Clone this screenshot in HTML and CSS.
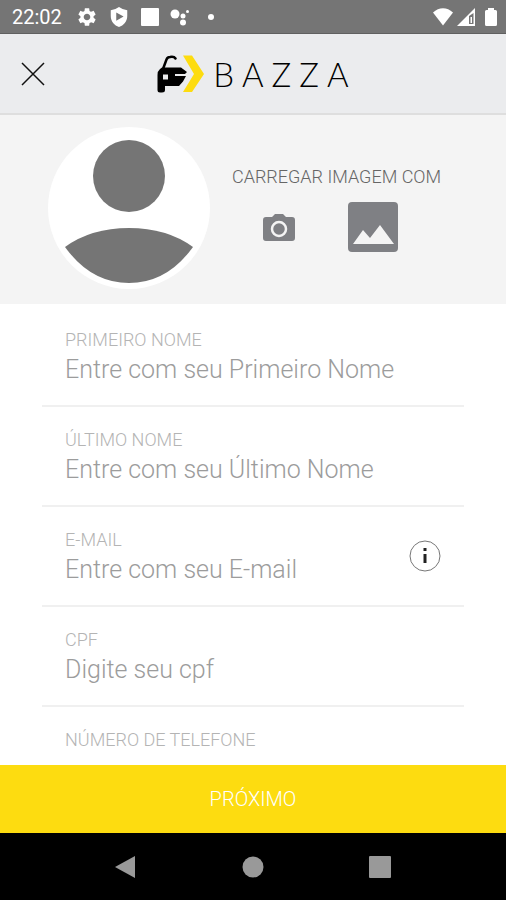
FILE: index.html
```html
<!DOCTYPE html>
<html lang="pt-BR">

<head>
    <meta charset="UTF-8">
    <meta name="viewport" content="width=device-width, initial-scale=1.0">
    <title>Bazza</title>
    <link rel="stylesheet" href="styles.css">
</head>

<body>
    <div class="status">
        <span class="clock">22:02</span>
        <div class="status-left">
            <svg width="22" height="22" viewBox="0 0 24 24">
                <path d="M19.14 12.94c.04-.3.06-.61.06-.94 0-.32-.02-.64-.07-.94l2.03-1.58c.18-.14.23-.41.12-.61l-1.92-3.32c-.12-.22-.37-.29-.59-.22l-2.39.96c-.5-.38-1.03-.7-1.62-.94l-.36-2.54c-.04-.24-.24-.41-.48-.41h-3.84c-.24 0-.43.17-.47.41l-.36 2.54c-.59.24-1.13.57-1.62.94l-2.39-.96c-.22-.08-.47 0-.59.22L2.74 8.87c-.12.21-.08.47.12.61l2.03 1.58c-.05.3-.09.63-.09.94s.02.64.07.94l-2.03 1.58c-.18.14-.23.41-.12.61l1.92 3.32c.12.22.37.29.59.22l2.39-.96c.5.38 1.03.7 1.62.94l.36 2.54c.05.24.24.41.48.41h3.84c.24 0 .44-.17.47-.41l.36-2.54c.59-.24 1.13-.56 1.62-.94l2.39.96c.22.08.47 0 .59-.22l1.92-3.32c.12-.22.07-.47-.12-.61l-2.01-1.58zM12 15.6c-1.98 0-3.6-1.62-3.6-3.6s1.62-3.6 3.6-3.6 3.6 1.62 3.6 3.6-1.62 3.6-3.6 3.6z"/>
            </svg>
            <svg width="22" height="22" viewBox="0 0 24 24">
                <path fill-rule="evenodd" d="M12 1Q8 4 3 4.500V11C3 17 7 21.500 12 23C17 21.500 21 17 21 11V4.500Q16 4 12 1zM9 7l8 4.500L9 16z"/>
            </svg>
            <svg width="20" height="20" viewBox="0 0 20 20">
                <rect x="1" y="1" width="18" height="18" rx="1"/>
            </svg>
            <svg width="20" height="20" viewBox="0 0 20 20">
                <circle cx="5" cy="7" r="4.500"/>
                <circle cx="13" cy="9" r="2.500"/>
                <circle cx="17.500" cy="4.500" r="1.500"/>
                <circle cx="13" cy="15.500" r="3"/>
            </svg>
            <svg width="22" height="22" viewBox="0 0 22 22">
                <circle cx="11" cy="11" r="3"/>
            </svg>
        </div>
        <div class="status-right">
            <svg width="22" height="20" viewBox="0 0 22 20">
                <path d="M1 5.500C7-.200 15-.200 21 5.500L11 18.500z"/>
            </svg>
            <svg width="20" height="20" viewBox="0 0 20 20">
                <path fill-rule="evenodd" d="M1 19L19 1v18zM13 9V17H17.500V6z"/>
                <path d="M14.500 10h1.500v6h-1.500z"/>
            </svg>
            <svg class="battery" width="14" height="20" viewBox="0 0 14 20">
                <path d="M4 1h6v2h1.500Q13 3 13 4.500v13Q13 19 11.500 19h-9Q1 19 1 17.500v-13Q1 3 2.500 3H4z"/>
            </svg>
        </div>
    </div>

    <header class="header">
        <button class="close" type="button" aria-label="Fechar">
            <svg width="24" height="24" viewBox="0 0 24 24">
                <path d="M1 1L23 23M23 1L1 23"/>
            </svg>
        </button>
        <div class="logo">
            <svg width="48" height="38" viewBox="0 0 48 38">
                <path fill="none" stroke="#000" stroke-width="2.500" stroke-linecap="round" d="M6 14L9.500 4.500Q10.500 2 13 2Q17 1.200 18.500 3.500"/>
                <path fill-rule="evenodd" d="M3 14L5 12.500H24L30 17L28 19H18V21H29L26 26.500L22 31H8V35Q8 37.500 5 37.500H3Q.500 37.500 .500 35V20Q.500 16 3 14zM6 19.500V24.500H11V19.500z"/>
                <path fill="#fddc10" d="M26 .500H35L47 19L35 37H26L37 19z"/>
            </svg>
            <span class="logo-name">BAZZA</span>
        </div>
    </header>

    <section class="upload">
        <svg class="avatar" width="162" height="162" viewBox="0 0 162 162">
            <circle cx="81" cy="81" r="81" fill="#fff"/>
            <circle cx="81" cy="49" r="36"/>
            <path d="M17 120Q43 101 81 101T145 120Q119 156 81 156T17 120z"/>
        </svg>
        <div class="upload-options">
            <p class="upload-title">CARREGAR IMAGEM COM</p>
            <div class="upload-buttons">
                <button type="button" aria-label="Câmera">
                    <svg width="32" height="28" viewBox="0 0 32 28">
                        <path d="M3 4H9L12 1H20L23 4H29Q32 4 32 7V25Q32 28 29 28H3Q0 28 0 25V7Q0 4 3 4z"/>
                        <circle cx="16" cy="16" r="7" fill="none" stroke="#f4f4f4" stroke-width="2.500"/>
                    </svg>
                </button>
                <button type="button" aria-label="Galeria">
                    <svg width="52" height="50" viewBox="0 0 52 50">
                        <rect x="1" width="50" height="50" rx="4"/>
                        <path fill="#f4f4f4" d="M6 42L16 28L23 36L33 23L47 42z"/>
                    </svg>
                </button>
            </div>
        </div>
    </section>

    <form class="form">
        <div class="field">
            <label for="nome">PRIMEIRO NOME</label>
            <input id="nome" type="text" placeholder="Entre com seu Primeiro Nome">
        </div>
        <div class="field">
            <label for="sobrenome">ÚLTIMO NOME</label>
            <input id="sobrenome" type="text" placeholder="Entre com seu Último Nome">
        </div>
        <div class="field field-info">
            <label for="email">E-MAIL</label>
            <input id="email" type="email" placeholder="Entre com seu E-mail">
            <button class="info" type="button" aria-label="Informações">
                <svg width="32" height="32" viewBox="0 0 32 32">
                    <circle cx="16" cy="16" r="15" fill="none" stroke="#777" stroke-width="1"/>
                    <path d="M14.500 8h3v3h-3zM14.500 14h3v9h-3z"/>
                </svg>
            </button>
        </div>
        <div class="field">
            <label for="cpf">CPF</label>
            <input id="cpf" type="text" placeholder="Digite seu cpf">
        </div>
        <div class="field">
            <label for="telefone">NÚMERO DE TELEFONE</label>
            <input id="telefone" type="tel">
        </div>
    </form>

    <button class="next" type="button">PRÓXIMO</button>

    <nav class="navbar">
        <button type="button" aria-label="Voltar">
            <svg width="24" height="24" viewBox="0 0 24 24">
                <path d="M1 12L21 1V23z"/>
            </svg>
        </button>
        <button type="button" aria-label="Início">
            <svg width="24" height="24" viewBox="0 0 24 24">
                <circle cx="12" cy="12" r="10.500"/>
            </svg>
        </button>
        <button type="button" aria-label="Recentes">
            <svg width="24" height="24" viewBox="0 0 24 24">
                <rect x="1" y="1" width="22" height="22" rx="1"/>
            </svg>
        </button>
    </nav>
</body>

</html>
```
FILE: styles.css
```css
* {
    box-sizing: border-box;
}

body {
    display: flex;
    flex-direction: column;
    height: 100vh;
    margin: 0;
    font-family: Roboto, sans-serif;
    font-weight: 300;
    background: #fff;
}

button {
    padding: 0;
    border: 0;
    background: none;
    font: inherit;
    cursor: pointer;
}

svg {
    display: block;
}

.status {
    display: flex;
    flex: none;
    align-items: center;
    height: 34px;
    padding: 0 8px 0 12px;
    background: #757575;
    border-bottom: 1px solid #606060;
    color: #fff;
    fill: #fff;
}

.clock {
    font-size: 20px;
    font-weight: 400;
}

.status-left {
    display: flex;
    align-items: center;
    gap: 10px;
    margin-left: 14px;
}

.status-right {
    display: flex;
    align-items: center;
    gap: 2px;
    margin-left: auto;
}

.battery {
    margin-left: 6px;
}

.header {
    display: grid;
    grid-template-columns: 1fr auto 1fr;
    flex: none;
    align-items: center;
    height: 81px;
    padding: 0 21px;
    background: #ebecee;
    border-bottom: 2px solid #dedede;
}

.close {
    justify-self: start;
    stroke: #111;
    stroke-width: 1.5;
}

.logo {
    display: flex;
    align-items: center;
    gap: 8px;
}

.logo-name {
    margin-right: -8px;
    font-family: Lato, sans-serif;
    font-size: 33px;
    font-weight: 300;
    line-height: 40px;
    letter-spacing: 8px;
    color: #000;
}

.upload {
    display: flex;
    flex: none;
    align-items: center;
    gap: 22px;
    height: 189px;
    padding: 0 48px 4px;
    background: #f4f4f4;
}

.avatar {
    flex: none;
    fill: #757575;
}

.upload-options {
    display: flex;
    flex-direction: column;
    gap: 12px;
}

.upload-title {
    margin: 0;
    font-size: 18px;
    line-height: 26px;
    color: #666;
    white-space: nowrap;
}

.upload-buttons {
    display: flex;
    align-items: center;
    gap: 52px;
    padding-left: 31px;
    fill: #7f8084;
}

.form {
    flex: 1;
    min-height: 0;
    padding: 3px 42px 0;
    overflow: hidden;
}

.field {
    display: grid;
    grid-template-rows: 20px 38px;
    height: 100px;
    padding: 23px 23px 0;
    border-bottom: 2px solid #f0f0f0;
}

.field-info {
    grid-template-columns: 1fr auto;
}

.field label {
    font-size: 18px;
    line-height: 20px;
    color: #b4b4b4;
}

.field input {
    width: 100%;
    padding: 0;
    border: 0;
    outline: 0;
    background: none;
    font: inherit;
    font-size: 25px;
    color: #444;
}

.field input::placeholder {
    color: #9c9c9c;
}

.info {
    grid-column: 2;
    grid-row: 1 / 3;
    align-self: center;
    margin-bottom: 6px;
    fill: #222;
}

.field-info input {
    grid-column: 1;
    grid-row: 2;
}

.next {
    flex: none;
    height: 68px;
    background: #fddc10;
    font-size: 20px;
    color: #fff;
}

.navbar {
    display: flex;
    flex: none;
    align-items: center;
    justify-content: space-around;
    height: 67px;
    padding: 0 63px;
    background: #000;
    fill: #999;
}
```
